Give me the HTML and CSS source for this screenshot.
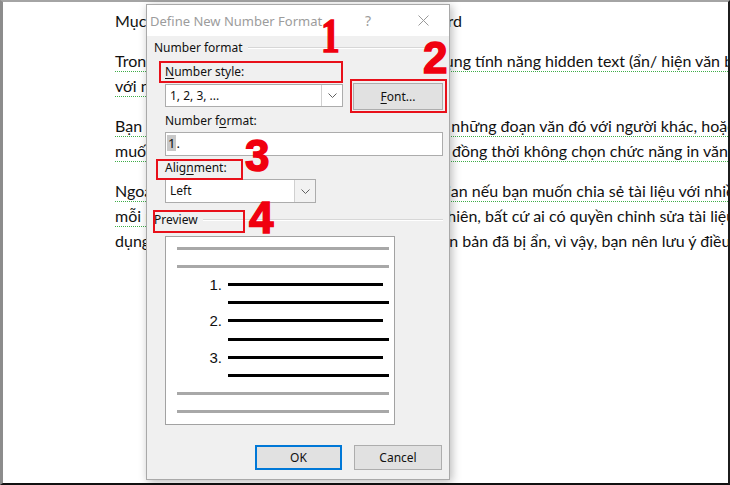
FILE: index.html
```html
<!DOCTYPE html>
<html lang="vi">
<head>
<meta charset="utf-8">
<title>Ẩn văn bản trong Word</title>
<link rel="stylesheet" href="styles.css">
</head>
<body>
<div class="screen">
  <div class="page">
    <p class="para">Mục đích của việc ẩn các đoạn văn bản trên Word</p>
    <p class="para">
      <span class="line squiggle">Trong Microsoft Word, người dùng có thể tận dụng tính năng hidden text (ẩn/ hiện văn bản) để ẩn đi nội dung</span>
      <span class="line squiggle">với người đọc.</span>
    </p>
    <p class="para">
      <span class="line squiggle">Bạn có thể ẩn đoạn văn khi không muốn chia sẻ những đoạn văn đó với người khác, hoặc không</span>
      <span class="line squiggle">muốn in những đoạn văn đó, hãy ẩn chúng đi và đồng thời không chọn chức năng in văn bản ẩn.</span>
    </p>
    <p class="para">
      <span class="line squiggle">Ngoài ra, cách ẩn đoạn văn giúp tiết kiệm thời gian nếu bạn muốn chia sẻ tài liệu với nhiều người,</span>
      <span class="line"><span class="squiggle">mỗi người sẽ chỉ được đọc một phần nhỏ.</span> Tuy nhiên, bất cứ ai có quyền chỉnh sửa tài liệu đều có thể sử</span>
      <span class="line">dụng tính năng hiện văn bản ẩn để tìm lại các văn bản đã bị ẩn, vì vậy, bạn nên lưu ý điều này.</span>
    </p>
  </div>

  <div class="dialog">
    <div class="titlebar">
      <span class="title">Define New Number Format</span>
      <span class="caption-btn help">?</span>
      <span class="caption-btn close">
        <svg width="11" height="11" viewBox="0 0 11 11"><path d="M0.5 0.5 L10.5 10.5 M10.5 0.5 L0.5 10.5" stroke="#9a9a9a" stroke-width="1" fill="none"/></svg>
      </span>
    </div>
    <div class="body">
      <div class="group-head"><span>Number format</span><span class="groove"></span></div>
      <div class="indent">
        <div class="style-row">
          <div class="style-col">
            <div class="label"><u>N</u>umber style:</div>
            <div class="combo combo-style">
              <span class="combo-value">1, 2, 3, ...</span>
              <span class="combo-arrow"><svg width="9" height="5" viewBox="0 0 9 5"><path d="M0.5 0.5 L4.5 4.5 L8.5 0.5" stroke="#606060" fill="none"/></svg></span>
            </div>
          </div>
          <button class="btn font-btn"><u>F</u>ont...</button>
        </div>
        <div class="label label-format">Number f<u>o</u>rmat:</div>
        <div class="textbox"><span class="selected">1</span>.</div>
        <div class="label label-align">Alig<u>n</u>ment:</div>
        <div class="combo combo-align">
          <span class="combo-value">Left</span>
          <span class="combo-arrow shaded"><svg width="9" height="5" viewBox="0 0 9 5"><path d="M0.5 0.5 L4.5 4.5 L8.5 0.5" stroke="#606060" fill="none"/></svg></span>
        </div>
      </div>
      <div class="group-head preview-head"><span>Preview</span><span class="groove"></span></div>
      <div class="indent">
        <div class="preview">
          <div class="pv-row"><span class="bar gray"></span></div>
          <div class="pv-row"><span class="bar gray"></span></div>
          <div class="pv-row item"><span class="num">1.</span><span class="bar black short"></span></div>
          <div class="pv-row item"><span class="num"></span><span class="bar black"></span></div>
          <div class="pv-row item"><span class="num">2.</span><span class="bar black short"></span></div>
          <div class="pv-row item"><span class="num"></span><span class="bar black"></span></div>
          <div class="pv-row item"><span class="num">3.</span><span class="bar black short"></span></div>
          <div class="pv-row item"><span class="num"></span><span class="bar black"></span></div>
          <div class="pv-row"><span class="bar gray"></span></div>
          <div class="pv-row"><span class="bar gray"></span></div>
        </div>
      </div>
      <div class="actions">
        <button class="btn ok">OK</button>
        <button class="btn cancel">Cancel</button>
      </div>
    </div>
  </div>

  <!-- step callouts -->
  <div class="callout box-style"></div>
  <div class="callout box-font"></div>
  <div class="callout box-align"></div>
  <div class="callout box-preview"></div>
  <div class="step step-1">1</div>
  <div class="step step-2">2</div>
  <div class="step step-3">3</div>
  <div class="step step-4">4</div>
</div>
</body>
</html>
```

FILE: styles.css
```css
* { box-sizing: border-box; }

html, body {
  margin: 0;
  padding: 0;
  background: #fff;
}

.screen {
  position: relative;
  width: 730px;
  height: 485px;
  overflow: hidden;
}

/* Word document page */
.page {
  width: 730px;
  height: 485px;
  background: #fff;
  border-top: 2px solid #a4a4a4;
  border-left: 3px solid #8c8c8c;
  border-right: 2px solid #1c1c1c;
  border-bottom: 2px solid #111;
  padding: 6px 0 0 112px;
  overflow: hidden;
  font-family: "Lato", "Liberation Sans", sans-serif;
  font-size: 16px;
  line-height: 25px;
  color: #111;
  white-space: nowrap;
}

.para {
  margin: 0 0 15px 0;
}

.line {
  display: block;
}

.squiggle {
  text-decoration: underline dotted #3fae49;
  text-decoration-thickness: 1px;
  text-underline-offset: 4px;
}

/* dialog window */
.dialog {
  position: absolute;
  left: 146px;
  top: 4px;
  width: 304px;
  height: 476px;
  background: #f0f0f0;
  border: 1px solid #a9a9a9;
  box-shadow: 2px 2px 9px rgba(0, 0, 0, 0.28);
  font-family: "Noto Sans", "Open Sans", sans-serif;
  font-size: 12px;
  color: #111;
}

.titlebar {
  height: 31px;
  background: #fff;
  display: flex;
  align-items: center;
}

.title {
  flex: 1;
  padding-left: 3px;
  font-size: 13px;
  color: #9c9c9c;
  white-space: nowrap;
}

.caption-btn {
  width: 46px;
  text-align: center;
  color: #9c9c9c;
  display: flex;
  justify-content: center;
  align-items: center;
}

.help {
  font-size: 14px;
  margin-right: 9px;
}

.close {
  margin-right: 3px;
}

.body {
  padding: 4px 6px 0 7px;
}

.group-head {
  display: flex;
  align-items: center;
  height: 16px;
  line-height: 16px;
}

.groove {
  flex: 1;
  margin-left: 5px;
  border-top: 1px solid #d7d7d7;
  border-bottom: 1px solid #fff;
}

.indent {
  padding-left: 11px;
}

.label {
  height: 16px;
  line-height: 16px;
}

.label u, .btn u {
  text-underline-offset: 2px;
}

.style-row {
  display: flex;
  align-items: flex-end;
  gap: 10px;
  margin-top: 8px;
}

.style-col {
  width: 178px;
}

.combo {
  display: flex;
  height: 23px;
  margin-top: 4px;
  background: #fff;
  border: 1px solid #acacac;
}

.combo-value {
  flex: 1;
  padding-left: 4px;
  line-height: 21px;
}

.combo-arrow {
  width: 21px;
  border-left: 1px solid #d0d0d0;
  display: flex;
  align-items: center;
  justify-content: center;
}

.combo-arrow.shaded {
  background: #f2f2f2;
}

.combo-align {
  width: 151px;
  height: 24px;
  margin-top: 3px;
}

.combo-align .combo-value {
  line-height: 22px;
}

.btn {
  font-family: "Noto Sans", "Open Sans", sans-serif;
  font-size: 12px;
  color: #111;
  background: #e1e1e1;
  border: 1px solid #adadad;
  padding: 0;
  cursor: default;
}

.font-btn {
  width: 90px;
  height: 27px;
  margin-bottom: -3px;
}

.label-format {
  margin-top: 6px;
}

.textbox {
  height: 24px;
  margin-top: 3px;
  background: #fff;
  border: 1px solid #acacac;
  padding: 2px 0 0 1px;
  line-height: 16px;
  font-size: 13px;
}

.selected {
  background: #c8c8c8;
  display: inline-block;
  padding: 0 1px;
}

.label-align {
  margin-top: 4px;
}

.preview-head {
  margin-top: 9px;
}

.preview {
  margin-top: 8px;
  width: 230px;
  height: 189px;
  background: #fff;
  border: 1px solid #a2a2a2;
  padding: 2px 5px 0 11px;
}

.pv-row {
  height: 18.2px;
  display: flex;
  align-items: center;
}

.bar {
  display: block;
  height: 3px;
  flex: 1;
}

.bar.gray {
  background: #a8a8a8;
}

.bar.black {
  background: #000;
}

.bar.black.short {
  margin-right: 6px;
}

.item .num {
  width: 51px;
  padding-right: 6px;
  text-align: right;
  font-family: "Liberation Sans", Arial, sans-serif;
  font-size: 15px;
  color: #111;
}

.actions {
  display: flex;
  justify-content: flex-end;
  gap: 12px;
  margin-top: 20px;
  padding-right: 1px;
}

.ok {
  width: 87px;
  height: 25px;
  border-color: #0078d7;
  box-shadow: inset 0 0 0 1px #0078d7;
}

.cancel {
  width: 88px;
  height: 25px;
}

/* red annotations */
.callout {
  position: absolute;
  border: 2px solid #e8101a;
}

.box-style { left: 159px; top: 61px; width: 184px; height: 22px; }
.box-font { left: 350px; top: 79px; width: 97px; height: 34px; }
.box-align { left: 156px; top: 159px; width: 87px; height: 21px; }
.box-preview { left: 153px; top: 210px; width: 92px; height: 23px; }

.step {
  position: absolute;
  color: #f0000f;
  font-family: "Liberation Sans", Arial, sans-serif;
  font-weight: bold;
  font-size: 44px;
  line-height: 1;
  -webkit-text-stroke: 1.5px #f0000f;
}

.step-1 {
  left: 321px;
  top: 12px;
  font-family: "Liberation Serif", "Times New Roman", serif;
  font-size: 48px;
  transform: scaleX(0.78);
  transform-origin: left top;
}

.step-2 { left: 423px; top: 36px; }
.step-3 { left: 245px; top: 134px; }
.step-4 { left: 249px; top: 196px; }
```
